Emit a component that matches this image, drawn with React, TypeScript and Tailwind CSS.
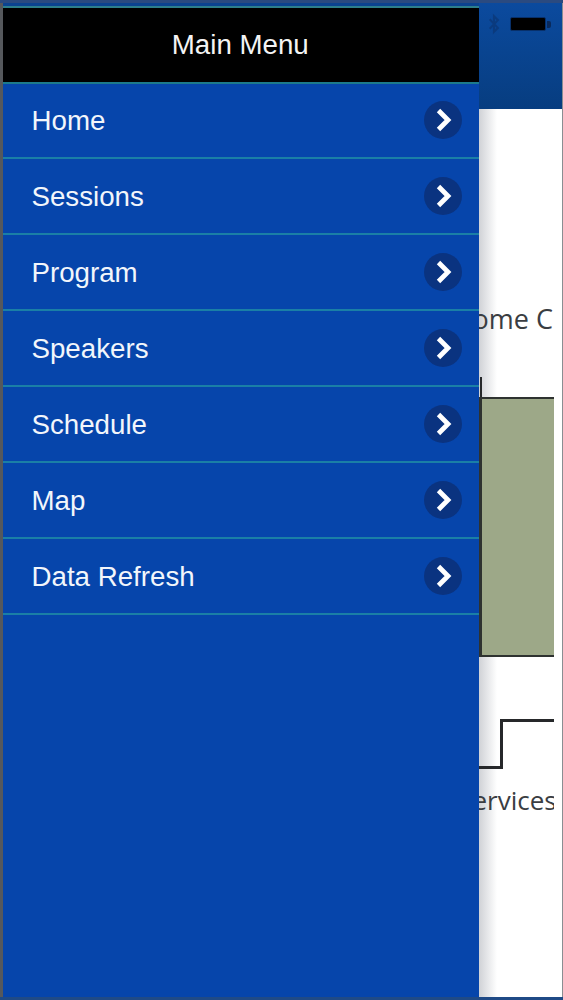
const items = ["Home", "Sessions", "Program", "Speakers", "Schedule", "Map", "Data Refresh"];

function Chevron() {
  return (
    <div className="flex h-[38px] w-[38px] items-center justify-center rounded-full bg-[#0a3380]">
      <svg width="18" height="26" viewBox="0 0 18 26" fill="none">
        <path d="M4.5 3.5 L14 13 L4.5 22.5" stroke="#ffffff" strokeWidth="4.8" strokeLinejoin="miter" />
      </svg>
    </div>
  );
}

export default function App() {
  return (
    <div
      className="flex h-[1000px] w-[563px] flex-col overflow-hidden bg-[#0b3f8c]"
      style={{ fontFamily: '"Liberation Sans", Arial, sans-serif' }}
    >
      <div className="h-[3px] shrink-0 bg-[#2a4a80]" />
      <div className="flex min-h-0 flex-1 bg-[#555a60]">
        <div className="w-[3px] shrink-0 bg-[#55585c]" />
        <div className="flex w-[475.5px] shrink-0 flex-col bg-[#0645ab]">
          <div className="h-[5px] shrink-0 border-b-2 border-[#2d7f8c] bg-[#0b4390]" />
          <div className="flex h-[75.5px] shrink-0 items-center justify-center border-b-2 border-[#1c7a8c] bg-black text-[27.7px] text-[#f4f4f4]">
            <span className="-ml-[1px]">Main Menu</span>
          </div>
          {items.map((t) => (
            <div
              key={t}
              className="flex h-[75.9px] shrink-0 items-center justify-between border-b-2 border-[#1a7fa6] pl-[28.5px] pr-[16.5px] text-[27.7px] text-[#f2f6fb]"
            >
              <span className="mt-[1px]">{t}</span>
              <Chevron />
            </div>
          ))}
        </div>
        <div className="relative flex min-w-0 flex-1 flex-col overflow-hidden bg-white">
          <div className="flex h-[106px] shrink-0 items-start gap-[10px] bg-gradient-to-b from-[#0b4a9e] to-[#073d80] pl-[9px] pt-[10px]">
            <svg width="12" height="22" viewBox="0 0 14 24" fill="none" className="opacity-50">
              <path d="M2 6.5 L11.5 16.5 L7 21 V3 L11.5 7.5 L2 17.5" stroke="#0b2f66" strokeWidth="2.4" />
            </svg>
            <div className="mt-[4px] flex items-center">
              <div className="h-[14px] w-[36px] rounded-[2px] border border-[#08306a] bg-black" />
              <div className="ml-[1px] h-[7px] w-[4px] rounded-r-[2px] bg-[#0a2a5c]" />
            </div>
          </div>
          <div className="relative z-10 flex w-[75.5px] flex-1 flex-col">
            <div
              className="mt-[192px] h-[36px] shrink-0 overflow-hidden whitespace-nowrap text-[27px] font-medium leading-[36px] text-[#3a3d42]"
              style={{ fontFamily: '"Open Sans", sans-serif' }}
            >
              <span className="-ml-[6px] inline-block">ome C</span>
            </div>
            <div className="ml-[1px] mt-[40px] h-[20px] w-[2.5px] shrink-0 bg-[#26282a]" />
            <div className="h-[260px] w-full shrink-0 border-y-2 border-l-[3px] border-[#2e3230] bg-[#9da888]" />
            <div className="mt-[62px] flex h-[50px] shrink-0">
              <div className="w-[21px] border-b-[3px] border-[#26282a]" />
              <div className="flex-1 border-l-[3px] border-t-[3px] border-[#26282a]" />
            </div>
            <div
              className="mt-[13px] h-[36px] shrink-0 overflow-hidden whitespace-nowrap text-[26px] font-medium leading-[36px] text-[#3a3d42]"
              style={{ fontFamily: '"Open Sans", sans-serif' }}
            >
              <span className="-ml-[6px] inline-block">ervices</span>
            </div>
          </div>
          <div className="absolute bottom-0 left-0 top-[106px] w-[18px] bg-gradient-to-r from-[#d0d2d6] to-transparent" />
        </div>
        <div className="w-[1px] shrink-0 bg-[#8a8d92]" />
      </div>
      <div className="h-[3px] shrink-0 bg-[#1f4a86]" />
    </div>
  );
}
